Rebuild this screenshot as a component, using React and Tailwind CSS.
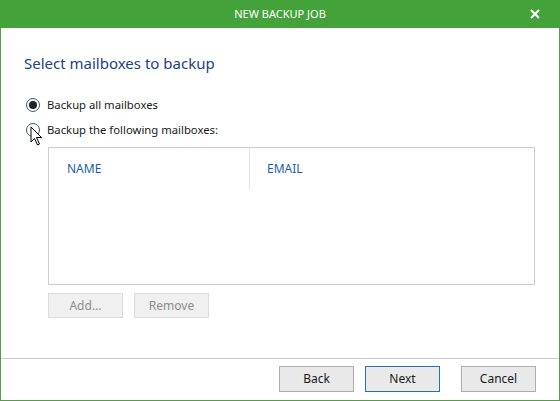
import React, { useState } from "react";

const font = { fontFamily: '"Noto Sans", "Open Sans", sans-serif' };

const Radio = ({ checked, label, onClick }) => (
  <label onClick={onClick} className="flex items-center gap-[7px] h-[16px] cursor-default">
    <span className="w-[14px] h-[14px] rounded-full border border-[#3d5a78] bg-white flex items-center justify-center">
      {checked && <span className="w-[8px] h-[8px] rounded-full bg-[#222]" />}
    </span>
    <span className="text-[11.3px] text-[#1a1a1a]">{label}</span>
  </label>
);

const Pointer = () => (
  <svg width="13" height="20" viewBox="0 0 13 20" className="absolute left-[30px] top-[126px]">
    <path
      d="M1 1 L1 16 L4.5 12.5 L7.5 19 L9.5 18 L6.5 11.5 L11.5 11.5 Z"
      fill="#fff"
      stroke="#000"
      strokeWidth="1"
      strokeLinejoin="round"
    />
  </svg>
);

export default function App() {
  const [mode, setMode] = useState("all");

  return (
    <div style={font} className="w-[560px] h-[401px] bg-white flex flex-col overflow-hidden relative">
      {/* title bar */}
      <div className="h-[28px] bg-[#44a23b] flex items-center relative shrink-0">
        <div className="flex-1 text-center text-white text-[11px]">NEW BACKUP JOB</div>
        <svg width="10" height="10" viewBox="0 0 10 10" className="absolute left-[530px] top-[9px]">
          <path d="M1 1 L9 9 M9 1 L1 9" stroke="#fff" strokeWidth="2" />
        </svg>
      </div>

      <div className="flex-1 flex flex-col border-x border-b border-[#5a9a4f]">
        <div className="flex-1 flex flex-col pl-[23px] pr-[24px]">
          <h1 className="text-[15px] text-[#233f86] mt-[25px] leading-[20px]">Select mailboxes to backup</h1>

          <div className="mt-[24px] flex flex-col gap-[9px] pl-[2px]">
            <Radio checked={mode === "all"} label="Backup all mailboxes" onClick={() => setMode("all")} />
            <Radio checked={mode === "list"} label="Backup the following mailboxes:" onClick={() => setMode("list")} />
          </div>

          {/* mailbox list */}
          <div className="ml-[24px] mt-[9px] h-[138px] border border-[#cfcfcf] flex flex-col">
            <div className="flex h-[41px]">
              <div className="w-[201px] border-r border-[#e4e4e4] flex items-center pl-[18px] text-[12px] text-[#1b5fa8]">
                NAME
              </div>
              <div className="flex-1 flex items-center pl-[17px] text-[12px] text-[#1b5fa8]">EMAIL</div>
            </div>
          </div>

          <div className="ml-[24px] mt-[8px] flex gap-[11px]">
            <button className="w-[75px] h-[25px] bg-[#f0f0f0] border border-[#dcdcdc] text-[12px] text-[#8c8c8c]">
              Add...
            </button>
            <button className="w-[75px] h-[25px] bg-[#f0f0f0] border border-[#dcdcdc] text-[12px] text-[#8c8c8c]">
              Remove
            </button>
          </div>
        </div>

        {/* footer */}
        <div className="border-t border-[#cccccc] h-[42px] flex items-start justify-end pt-[7px] pr-[23px] gap-[11px]">
          <button className="w-[75px] h-[26px] bg-[#e9e9e9] border border-[#adadad] text-[12px] text-[#1a1a1a]">
            Back
          </button>
          <button className="w-[75px] h-[26px] bg-[#e9e9e9] border border-[#2a6fb0] text-[12px] text-[#1a1a1a] mr-[10px]">
            Next
          </button>
          <button className="w-[75px] h-[26px] bg-[#e9e9e9] border border-[#adadad] text-[12px] text-[#1a1a1a]">
            Cancel
          </button>
        </div>
      </div>

      <Pointer />
    </div>
  );
}
